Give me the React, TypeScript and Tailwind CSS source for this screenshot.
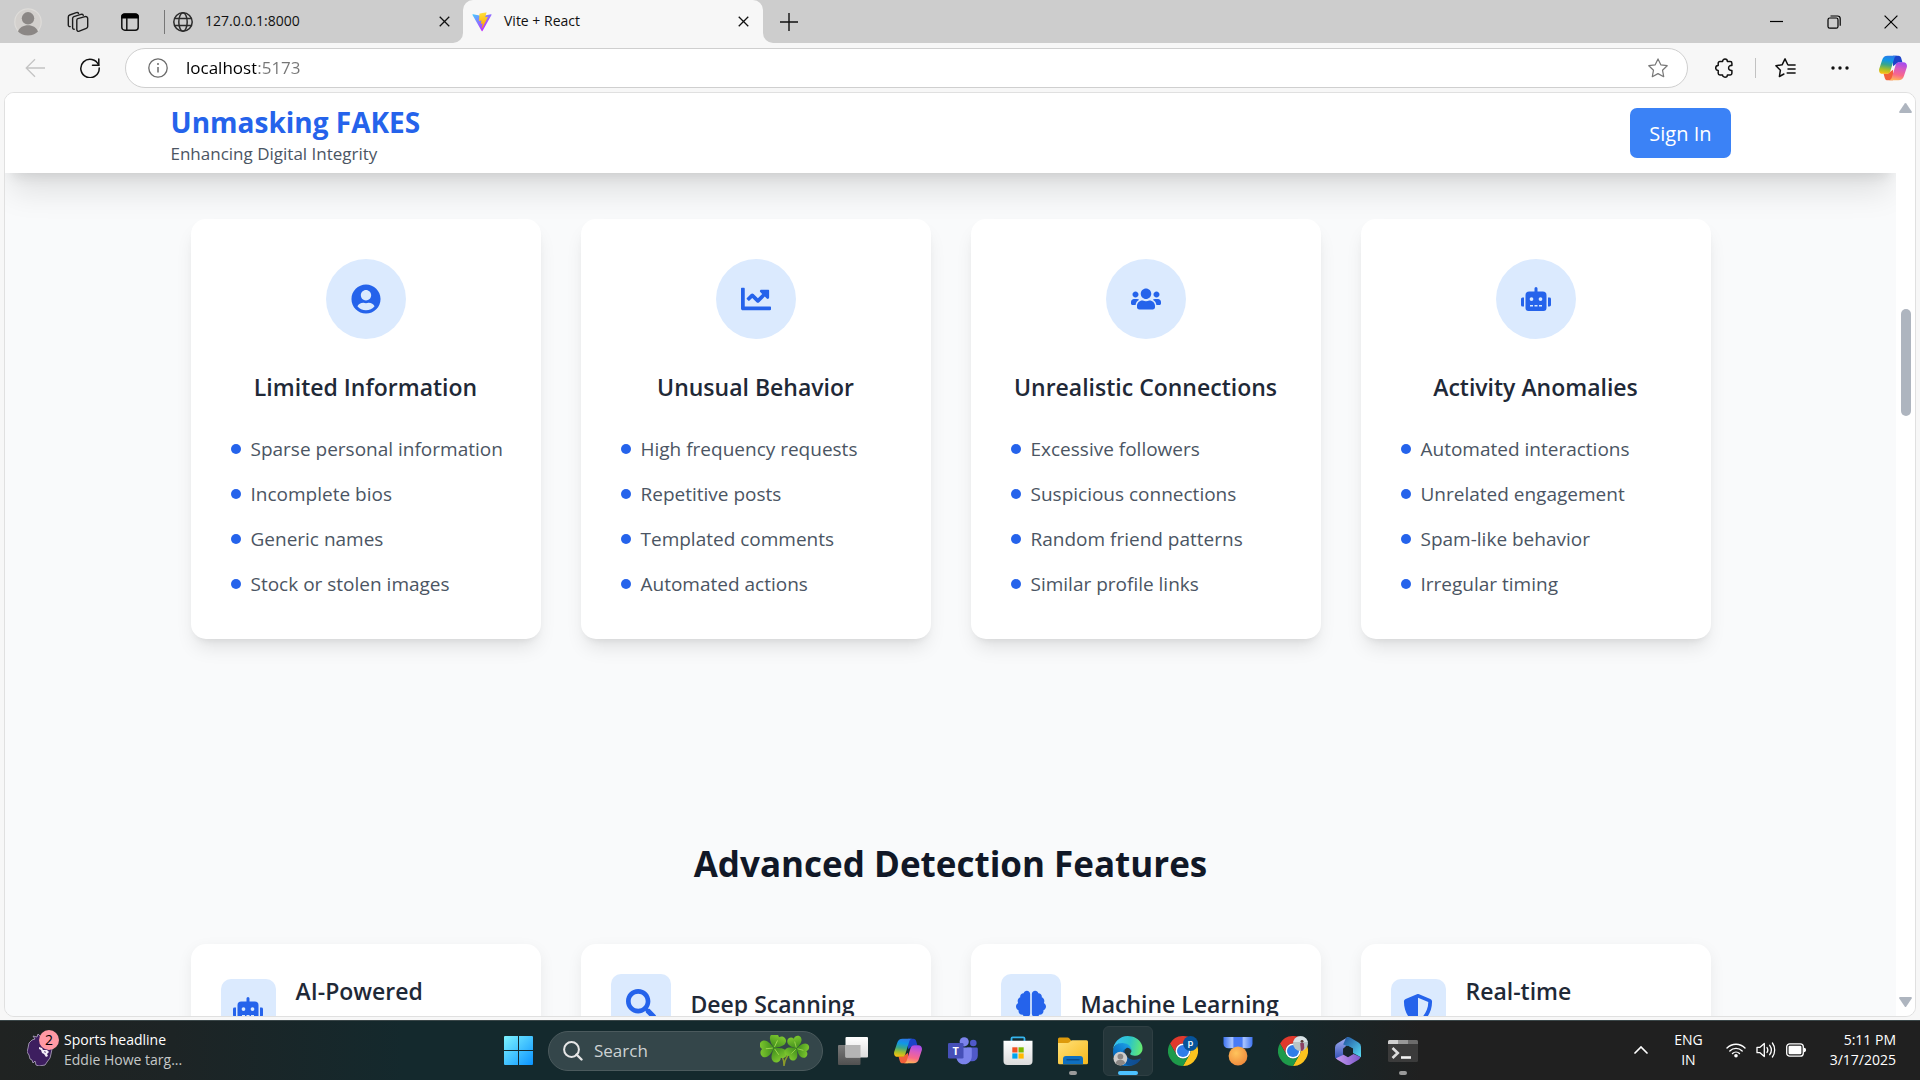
import React from "react";
import { FaBrain, FaChartLine, FaRobot, FaSearch, FaShieldAlt, FaUserCircle, FaUsers } from "react-icons/fa";

type IconProps = { className?: string };

/* ---------- Browser icons ---------- */

function CloseIcon({ className = "size-[11px]" }: IconProps) {
  return (
    <svg viewBox="0 0 12 12" className={className} fill="none" stroke="currentColor" strokeWidth="1.4">
      <path d="M.8.8l10.4 10.4M11.2.8L.8 11.2" />
    </svg>
  );
}

function AvatarIcon() {
  return (
    <svg viewBox="0 0 28 28" className="size-7">
      <circle cx="14" cy="14" r="13.2" fill="#d3d0cd" stroke="#dedcd9" strokeWidth="1.2" />
      <circle cx="14" cy="10.3" r="6.2" fill="#8b8785" />
      <path d="M4 23.4c1.5-4 5.4-6.2 10-6.2s8.500 2.200 10 6.200A13.500 13.500 0 0 1 14 27.500 13.500 13.500 0 0 1 4 23.400z" fill="#8b8785" />
    </svg>
  );
}

function WorkspacesIcon() {
  return (
    <svg viewBox="0 0 22 22" className="size-[22px]" fill="none" stroke="#1d1d1d" strokeWidth="1.400" strokeLinejoin="round" strokeLinecap="round">
      <path d="M10.800 7.700l7.200-2.100c1.300-.4 2.700.4 2.700 1.900v8c0 .9-.6 1.600-1.400 1.900l-7 2.800c-1.200.5-2.500-.3-2.500-1.700V9.400c0-.8.300-1.500 1-1.700z" />
      <path d="M7.200 18.300c-1 .1-1.600-.700-1.600-1.700V7.600c0-1 .5-1.700 1.300-2l7-2.200c1-.3 2 .1 2.400.9" />
      <path d="M3.200 15.600C2.200 15.800 1.300 15 1.300 14V6c0-1 .5-1.700 1.400-2l6.600-2.300c1-.3 1.900 0 2.300.7" />
    </svg>
  );
}

function TabMenuIcon() {
  return (
    <svg viewBox="0 0 20 20" className="size-5" fill="none">
      <rect x="1.800" y="2" width="16.400" height="16.200" rx="3" stroke="#111" strokeWidth="1.500" />
      <path d="M1.200 6.500V5a3.500 3.500 0 0 1 3.500-3.500h10.600A3.500 3.500 0 0 1 18.800 5v1.500z" fill="#000" />
      <path d="M6.800 6v12" stroke="#111" strokeWidth="1.500" />
    </svg>
  );
}

function GlobeIcon() {
  return (
    <svg viewBox="0 0 20 20" className="size-5" fill="none" stroke="#2b2b2b" strokeWidth="1.500">
      <circle cx="10" cy="10" r="9.200" />
      <ellipse cx="10" cy="10" rx="4.200" ry="9.200" />
      <path d="M1.600 6.600h16.800M1.600 13.400h16.800" />
    </svg>
  );
}

function ViteIcon() {
  return (
    <svg viewBox="0 0 410 404" className="size-5">
      <defs>
        <linearGradient id="viteA" x1="6" y1="33" x2="235" y2="344" gradientUnits="userSpaceOnUse">
          <stop stopColor="#41D1FF" />
          <stop offset="1" stopColor="#BD34FE" />
        </linearGradient>
        <linearGradient id="viteB" x1="194.650" y1="8.800" x2="236" y2="293" gradientUnits="userSpaceOnUse">
          <stop stopColor="#FFEA83" />
          <stop offset=".083" stopColor="#FFDD35" />
          <stop offset="1" stopColor="#FFA800" />
        </linearGradient>
      </defs>
      <path fill="url(#viteA)" d="M399.641 59.525L215.643 388.545C211.844 395.338 202.084 395.378 198.228 388.618L10.582 59.556C6.381 52.190 12.680 43.266 21.028 44.759L205.223 77.682C206.398 77.892 207.601 77.890 208.776 77.676L389.119 44.806C397.439 43.289 403.768 52.143 399.641 59.525Z" />
      <path fill="url(#viteB)" d="M292.965 1.574L156.801 28.255C154.563 28.694 152.906 30.590 152.771 32.866L144.395 174.330C144.198 177.662 147.258 180.248 150.510 179.498L188.420 170.749C191.967 169.931 195.172 173.055 194.443 176.622L183.180 231.775C182.422 235.487 185.907 238.661 189.532 237.560L212.947 230.446C216.577 229.344 220.065 232.527 219.297 236.242L201.398 322.875C200.278 328.294 207.486 331.249 210.492 326.603L212.500 323.500L323.454 102.072C325.312 98.365 322.108 94.137 318.036 94.923L279.014 102.454C275.347 103.161 272.227 99.746 273.262 96.158L298.731 7.867C299.767 4.273 296.636 .855 292.965 1.574Z" />
    </svg>
  );
}

function BackIcon() {
  return (
    <svg viewBox="0 0 20 20" className="size-5" fill="none" stroke="#c4c4c4" strokeWidth="1.300">
      <path d="M20 10H1M10 1.200L1.200 10l8.800 8.800" />
    </svg>
  );
}

function ReloadIcon() {
  return (
    <svg viewBox="0 0 20 20" className="size-5" fill="none" stroke="#111" strokeWidth="1.500" strokeLinecap="round">
      <path d="M18.600 7.100A9.200 9.200 0 1 0 19.200 10" />
      <path d="M18.800.9v6.300h-6.300" />
    </svg>
  );
}

function InfoIcon() {
  return (
    <svg viewBox="0 0 20 20" className="size-5" fill="none" stroke="#6b6b6b" strokeWidth="1.300">
      <circle cx="10" cy="10" r="9.200" />
      <path d="M10 9v5.600" strokeWidth="1.500" />
      <circle cx="10" cy="6" r="1" fill="#6b6b6b" stroke="none" />
    </svg>
  );
}

function StarIcon() {
  return (
    <svg viewBox="0 0 20 20" className="size-5" fill="none" stroke="#777" strokeWidth="1.200" strokeLinejoin="round">
      <path d="M10 .9l2.800 5.900 6.400.9-4.700 4.500 1.200 6.500-5.700-3.100-5.700 3.100 1.200-6.500L.8 7.700l6.400-.9z" />
    </svg>
  );
}

function PuzzleIcon() {
  return (
    <svg viewBox="0 0 20 20" className="size-5" fill="none" stroke="#111" strokeWidth="1.500" strokeLinejoin="round">
      <path d="M3.200 5.200c0-1 .7-1.700 1.700-1.700h2.700C7.600 2 8.600.9 10 .9s2.400 1.100 2.400 2.600h2.800c1 0 1.700.700 1.700 1.700v2.200c-2-.2-3.300.9-3.300 2.500s1.300 2.800 3.300 2.600v2.700c0 1-.7 1.700-1.700 1.700h-2.800c0 1.400-1 2.300-2.400 2.300s-2.400-.9-2.400-2.300H4.900c-1 0-1.700-.7-1.700-1.700v-2.800C1.700 12.400.7 11.400.7 9.900s1-2.500 2.500-2.500z" />
    </svg>
  );
}

function FavoritesIcon() {
  return (
    <svg viewBox="0 0 21 20" className="h-5 w-[21px]" fill="none" stroke="#111" strokeWidth="1.500" strokeLinejoin="round" strokeLinecap="round">
      <path d="M12.800 6.800L10 .9 7.100 6.800l-6.200.9 4.500 4.500-1 6.300 4.500-2.500M12.800 6.800h.4M13.300 6.900h6.800M13 10.900h7.100M12.200 14.900h7.900" />
    </svg>
  );
}

function CopilotIcon({ id, className = "size-7" }: { id: string; className?: string }) {
  return (
    <svg viewBox="0 0 32 32" className={className}>
      <defs>
        <linearGradient id={id + "L"} x1=".5" y1="0" x2=".35" y2="1">
          <stop stopColor="#2a7be8" />
          <stop offset=".25" stopColor="#1097e6" />
          <stop offset=".5" stopColor="#3aa68a" />
          <stop offset=".75" stopColor="#a3bf2c" />
          <stop offset="1" stopColor="#fdbe10" />
        </linearGradient>
        <linearGradient id={id + "R"} x1=".6" y1="0" x2=".4" y2="1">
          <stop stopColor="#a34bf0" />
          <stop offset=".35" stopColor="#d85bc0" />
          <stop offset=".7" stopColor="#f9688a" />
          <stop offset="1" stopColor="#ffb45a" />
        </linearGradient>
      </defs>
      <path fill="#1d43c9" d="M16 2h6c2 0 3 1.200 3.500 3l1.300 4.600h-5L16 14z" />
      <path fill="#f2603a" d="M16 30h-6c-2 0-3-1.200-3.500-3l-1.300-4.600h5L16 18z" />
      <path fill={"url(#" + id + "L)"} d="M9.800 2h11c-1.900 0-2.900 1.300-3.500 3.300l-4.300 14c-.7 2.200-1.900 3.400-4 3.400H4.300C1 22.700-.5 20.200.2 17L3.500 7C4.600 3.700 6.600 2 9.800 2z" />
      <path fill={"url(#" + id + "R)"} d="M22.200 30h-11c1.900 0 2.900-1.300 3.500-3.300l4.300-14c.7-2.200 1.900-3.400 4-3.400h4.700c3.300 0 4.800 2.500 4.100 5.700l-3.300 10c-1.100 3.300-3.100 5-6.300 5z" />
    </svg>
  );
}

/* ---------- Taskbar icons ---------- */

function StartIcon() {
  return (
    <svg viewBox="0 0 29 29" className="size-[29px]">
      <defs>
        <linearGradient id="win" x1="0" y1="0" x2="1" y2="1" gradientUnits="objectBoundingBox">
          <stop stopColor="#7df3ff" />
          <stop offset="1" stopColor="#0a93ff" />
        </linearGradient>
      </defs>
      <path fill="url(#win)" d="M1 0h13v14H0V1a1 1 0 0 1 1-1zM15 0h13a1 1 0 0 1 1 1v13H15zM0 15h14v14H1a1 1 0 0 1-1-1zM15 15h14v13a1 1 0 0 1-1 1H15z" />
    </svg>
  );
}

function CloverLeaf({ transform }: { transform: string }) {
  return (
    <g transform={transform}>
      {[0, 120, 240].map((a) => (
        <g key={a} transform={"rotate(" + a + ")"}>
          <path fill="url(#leaf)" d="M0 0C-3-2-8-5-7-9c.7-3 5-4 7-1 2-3 6.300-2 7 1 1 4-4 7-7 9z" />
          <path d="M0-1v-6" stroke="#a6dc54" strokeWidth=".7" />
        </g>
      ))}
    </g>
  );
}

function CloverIcon() {
  return (
    <svg viewBox="0 0 50 32" className="h-8 w-[50px]">
      <defs>
        <linearGradient id="leaf" x1="0" y1="0" x2="0" y2="1">
          <stop stopColor="#7cc62e" />
          <stop offset="1" stopColor="#3f8e1c" />
        </linearGradient>
      </defs>
      <path d="M15 14c6 3 9 9 9 17M36 14c-7 3-11 8-12 17" fill="none" stroke="#8a9a2b" strokeWidth="1.500" />
      <CloverLeaf transform="translate(14 13) rotate(25) scale(1.180)" />
      <CloverLeaf transform="translate(36.500 13.500) rotate(-15) scale(1.020)" />
    </svg>
  );
}

function TaskViewIcon() {
  return (
    <svg viewBox="0 0 30 28" className="h-7 w-[30px]">
      <defs>
        <linearGradient id="tvA" x1="0" y1="0" x2="0" y2="1">
          <stop stopColor="#7a7a7a" />
          <stop offset="1" stopColor="#505050" />
        </linearGradient>
        <linearGradient id="tvB" x1="0" y1="0" x2="0" y2="1">
          <stop stopColor="#fff" />
          <stop offset="1" stopColor="#dcdcdc" />
        </linearGradient>
      </defs>
      <rect x="0" y="8" width="22.500" height="20" rx="1" fill="url(#tvA)" />
      <rect x="7.500" y="0" width="22.500" height="20.500" rx="1" fill="url(#tvB)" />
      <rect x="7.500" y="8" width="15" height="12.500" fill="#b4b4b4" />
    </svg>
  );
}

function TeamsIcon() {
  return (
    <svg viewBox="0 0 30 28" className="h-7 w-[30px]">
      <circle cx="25.300" cy="6" r="3.300" fill="#5059c9" />
      <path d="M19 10.500h9.500a1.300 1.300 0 0 1 1.300 1.300v7a5.500 5.500 0 0 1-5.500 5.500H21z" fill="#5059c9" />
      <circle cx="16.200" cy="4.800" r="4.600" fill="#7b83eb" />
      <path d="M9.500 10.500h13a1.300 1.300 0 0 1 1.300 1.300V19c0 4.700-3.300 8.300-7.800 8.300S8.200 23.700 8.200 19v-7.200a1.300 1.300 0 0 1 1.300-1.300z" fill="#7b83eb" />
      <rect x="0" y="6" width="15.500" height="15.500" rx="1.300" fill="#4650b8" />
      <text x="7.750" y="17.800" fontSize="11" fontWeight="700" textAnchor="middle" fill="#fff" fontFamily="Open Sans, sans-serif">T</text>
    </svg>
  );
}

function StoreIcon() {
  return (
    <svg viewBox="0 0 30 30" className="size-[30px]">
      <defs>
        <linearGradient id="bag" x1="0" y1="0" x2="0" y2="1">
          <stop stopColor="#fff" />
          <stop offset="1" stopColor="#dcdcdc" />
        </linearGradient>
      </defs>
      <path d="M8.500 6V2.500a1.200 1.200 0 0 1 1.200-1.200h10.600a1.200 1.200 0 0 1 1.200 1.200V6" fill="none" stroke="#35b5ee" strokeWidth="1.800" />
      <path d="M.5 4.800h29V25a4 4 0 0 1-4 4h-21a4 4 0 0 1-4-4z" fill="url(#bag)" />
      <rect x="9.300" y="11.300" width="5.200" height="5.200" fill="#f25022" />
      <rect x="15.500" y="11.300" width="5.200" height="5.200" fill="#7fba00" />
      <rect x="9.300" y="17.400" width="5.200" height="5.200" fill="#00a4ef" />
      <rect x="15.500" y="17.400" width="5.200" height="5.200" fill="#ffb900" />
    </svg>
  );
}

function FolderIcon() {
  return (
    <svg viewBox="0 0 30 28" className="h-7 w-[30px]">
      <defs>
        <linearGradient id="fold" x1="0" y1="0" x2="1" y2="1">
          <stop stopColor="#ffe17a" />
          <stop offset="1" stopColor="#f8b91c" />
        </linearGradient>
      </defs>
      <path d="M0 2a1.500 1.500 0 0 1 1.500-1.500h8.200a2 2 0 0 1 1.500.7L13.500 4v6H0z" fill="#dd9a0c" />
      <path d="M0 6h9.500a3 3 0 0 0 2-.8L13 3.800a2 2 0 0 1 1.400-.6h14.100A1.500 1.500 0 0 1 30 4.700v21a1.500 1.500 0 0 1-1.500 1.500h-27A1.500 1.500 0 0 1 0 25.700z" fill="url(#fold)" />
      <path d="M5 27.200v-5.200a3 3 0 0 1 3-3h14a3 3 0 0 1 3 3v5.200z" fill="#0f6fc0" />
      <path d="M8.500 22.800h13" stroke="#083f7d" strokeWidth="1.100" />
    </svg>
  );
}

function EdgeIcon() {
  return (
    <svg viewBox="0 0 260 260" className="size-[30px]">
      <defs>
        <linearGradient id="eA" x1="63" y1="177" x2="241" y2="177" gradientUnits="userSpaceOnUse">
          <stop stopColor="#0c59a4" />
          <stop offset="1" stopColor="#114a8b" />
        </linearGradient>
        <linearGradient id="eB" x1="157" y1="101" x2="46" y2="222" gradientUnits="userSpaceOnUse">
          <stop stopColor="#1b9de2" />
          <stop offset=".5" stopColor="#0f7ed0" />
          <stop offset="1" stopColor="#0667b8" />
        </linearGradient>
        <linearGradient id="eC" x1="20" y1="70" x2="250" y2="120" gradientUnits="userSpaceOnUse">
          <stop stopColor="#35c1f1" />
          <stop offset=".5" stopColor="#2cc4c9" />
          <stop offset="1" stopColor="#66eb6e" />
        </linearGradient>
      </defs>
      <path fill="url(#eA)" d="M235.680 195.460a93.730 93.730 0 0 1-10.540 4.710 101.870 101.870 0 0 1-35.900 6.460c-47.320 0-88.540-32.550-88.540-74.320a31.480 31.480 0 0 1 16.430-27.450c-42.800 1.800-53.800 46.400-53.800 72.530 0 73.880 68.090 81.370 82.760 81.370 7.910 0 19.840-2.300 27-4.560l1.310-.44a128.340 128.340 0 0 0 66.600-52.800 4 4 0 0 0-5.320-5.500z" />
      <path fill="url(#eB)" d="M105.730 241.420A79.200 79.200 0 0 1 83 220.080 80.720 80.720 0 0 1 117.130 104.860c1.770-.84 4.800-2.360 8.830-2.290A33.400 33.400 0 0 1 152.460 116a33.890 33.890 0 0 1 6.650 19.550c0-.21 24.460-79.600-80-79.600-43.900 0-79 41.660-79 78.210a130.150 130.150 0 0 0 11.110 56 128 128 0 0 0 156.380 67.110 75.550 75.550 0 0 1-61.870-15.850z" />
      <path fill="url(#eC)" d="M152.330 148.860c-.81 1.050-3.300 2.500-3.300 5.660 0 2.610 1.700 5.120 4.720 7.230 14.380 10 41.490 8.680 41.560 8.680a59.560 59.560 0 0 0 30.270-8.350A61.380 61.380 0 0 0 256 109.190C256.260 86.690 248 71.730 244.660 65.130 223.460 23.670 177.720 0 128 0A128 128 0 0 0 0 126.200c.48-36.540 36.800-66.050 80-66.050 3.500 0 23.460.34 42 10.070 16.340 8.580 24.900 18.940 30.850 29.210 6.180 10.670 7.280 24.150 7.280 29.520 0 5.370-2.740 13.330-7.800 19.910z" />
      <circle cx="64" cy="196" r="60" fill="#cfcdcb" />
      <circle cx="64" cy="178" r="25" fill="#8b8785" />
      <path d="M22 236c5-20 22-30 42-30s37 10 42 30a60 60 0 0 1-84 0z" fill="#8b8785" />
    </svg>
  );
}

function ChromeIcon({ badge }: { badge: "letter" | "photo" }) {
  const arc = "M3.200 12A24 24 0 0 1 44.800 12H24A12 12 0 0 0 13.600 30Z";
  return (
    <svg viewBox="0 0 48 48" className="size-[30px]">
      <path d={arc} fill="#e0392d" />
      <path d={arc} fill="#fcc31e" transform="rotate(120 24 24)" />
      <path d={arc} fill="#1e9a4a" transform="rotate(240 24 24)" />
      <circle cx="24" cy="24" r="12" fill="#fff" />
      <circle cx="24" cy="24" r="9.600" fill="#2f7de9" />
      {badge === "letter" ? (
        <>
          <circle cx="36" cy="12" r="12" fill="#06539a" />
          <text x="36" y="16.500" fontSize="15" fontWeight="600" textAnchor="middle" fill="#fff" fontFamily="Open Sans, sans-serif">p</text>
        </>
      ) : (
        <>
          <circle cx="36" cy="12" r="12" fill="#b9c4c6" />
          <path d="M24.500 9.500A12 12 0 0 1 47.500 9.500z" fill="#d8e2e6" />
          <path d="M35.500 12c0-1.500 5.500-1.500 6 0l.5 7-2 4.300-3.300.6z" fill="#8c3f62" />
          <circle cx="38.500" cy="8.500" r="2.300" fill="#5a3a35" />
        </>
      )}
    </svg>
  );
}

function MedalIcon() {
  return (
    <svg viewBox="0 0 30 30" className="size-[30px]">
      <defs>
        <radialGradient id="med" cx=".4" cy=".35" r=".7">
          <stop stopColor="#ffc45c" />
          <stop offset="1" stopColor="#f08a3c" />
        </radialGradient>
        <linearGradient id="rib" x1="0" y1="0" x2="1" y2="0">
          <stop stopColor="#3f74f0" />
          <stop offset=".3" stopColor="#a9c4ff" />
          <stop offset=".5" stopColor="#3d6ff2" />
          <stop offset=".7" stopColor="#a9c4ff" />
          <stop offset="1" stopColor="#3f74f0" />
        </linearGradient>
      </defs>
      <path d="M.5 1h29v6.500c0 3-2 4.800-5 4.800h-19c-3 0-5-1.800-5-4.800z" fill="url(#rib)" />
      <path d="M10.500 1h9v11h-9z" fill="#4a7bf6" />
      <circle cx="15" cy="20" r="9.400" fill="url(#med)" />
    </svg>
  );
}

function M365Icon() {
  return (
    <svg viewBox="0 0 28 30" className="h-[30px] w-7">
      <defs>
        <linearGradient id="mA" x1="0" y1="0" x2="0" y2="1">
          <stop stopColor="#a9b4f5" />
          <stop offset="1" stopColor="#3450b4" />
        </linearGradient>
        <linearGradient id="mB" x1="0" y1="0" x2="1" y2="1">
          <stop stopColor="#1f4f9c" />
          <stop offset="1" stopColor="#59ddf5" />
        </linearGradient>
        <linearGradient id="mC" x1="0" y1="0" x2="1" y2="0">
          <stop stopColor="#c79bf0" />
          <stop offset="1" stopColor="#7a57c9" />
        </linearGradient>
      </defs>
      <path d="M14 1L3.500 7.200A5 5 0 0 0 1 11.500v9c0 1.500 1 2.700 2.500 2.500l5.700-3V13l8-8.500z" fill="url(#mA)" />
      <path d="M12 1.700a4.500 4.500 0 0 1 4.500 0l8 4.800A5 5 0 0 1 27 10.800v10.500L19 17v-4.500L9.200 8.500z" fill="url(#mB)" />
      <path d="M2 22.200l7.500-3.400 4.500 2.500 5.500-3.200 7 3a4.500 4.500 0 0 1-2 2.600l-8 4.700a5 5 0 0 1-5 0l-8-4.700A3.500 3.500 0 0 1 2 22.200z" fill="url(#mC)" />
      <path d="M14 9.700l4.700 2.700v5.400L14 20.500l-4.700-2.700v-5.400z" fill="#182428" />
    </svg>
  );
}

function TerminalIcon() {
  return (
    <svg viewBox="0 0 30 22" className="h-[22px] w-[30px]">
      <rect width="30" height="22" rx="1.500" fill="#3b3b3b" />
      <path d="M0 4V1.500A1.500 1.500 0 0 1 1.500 0H10v4z" fill="#cfcfcf" />
      <path d="M10 0h10v4H10z" fill="#989898" />
      <path d="M20 0h8.500A1.500 1.500 0 0 1 30 1.500V4H20z" fill="#6c6c6c" />
      <path d="M4.500 8l5.300 5-5.300 5" fill="none" stroke="#dcdcdc" strokeWidth="2.600" />
      <path d="M13 17.500h10" stroke="#f2f2f2" strokeWidth="2.600" />
    </svg>
  );
}

function LionIcon() {
  return (
    <svg viewBox="0 0 26 32" className="h-8 w-[26px]">
      <path
        d="M8 5L6 2l4 1 1-3 3 3 4-1 1 4 4 2-1 3 3 4-1 5-1 4-3 4-2 3-6 1-3-1-1-4-2 2-1-3-2-1-1-4-2-3 1-4 1-5 3-3z"
        fill="#3d1e5f"
        stroke="#b5a9c4"
        strokeWidth=".8"
      />
      <path d="M12 13l3 1 1 2 4 0 2 2-2 2 1 2-2 1-2-3-2-1-1-3-2-1z" fill="#f4eef8" />
      <path d="M17 17l2 1-1 1z" fill="#3d1e5f" />
    </svg>
  );
}

function WifiIcon() {
  return (
    <svg viewBox="0 0 20 16" className="h-4 w-5" fill="none" stroke="#fff" strokeWidth="1.400" strokeLinecap="round">
      <path d="M1 6a12.700 12.700 0 0 1 18 0M3.800 8.900a8.800 8.800 0 0 1 12.400 0M6.500 11.600a5 5 0 0 1 7 0" />
      <circle cx="10" cy="13.700" r="1.800" fill="#fff" stroke="none" />
    </svg>
  );
}

function SpeakerIcon() {
  return (
    <svg viewBox="0 0 20 18" className="h-[18px] w-5" fill="none" stroke="#fff" strokeWidth="1.300" strokeLinecap="round" strokeLinejoin="round">
      <path d="M1 6.300h3L8.300 2.500v13L4 11.700H1z" />
      <path d="M11 6.500c1 1.500 1 3.500 0 5M13.700 4.300c2 2.800 2 6.600 0 9.400M16.400 2c3 4 3 10 0 14" />
    </svg>
  );
}

function BatteryIcon() {
  return (
    <svg viewBox="0 0 20 14" className="h-3.5 w-5">
      <rect x=".7" y=".8" width="16.600" height="12.400" rx="3" fill="none" stroke="#fff" strokeWidth="1.300" />
      <rect x="2.600" y="2.700" width="12.800" height="8.600" rx="1.200" fill="#fff" />
      <path d="M18 4.800c1.200 0 2 .8 2 2.200s-.8 2.200-2 2.200z" fill="#fff" />
    </svg>
  );
}

/* ---------- Browser chrome ---------- */

function TabStrip() {
  return (
    <div className="flex h-[43px] shrink-0 text-[14px] text-[#111]">
      <div className="flex w-[463px] shrink-0 items-center rounded-br-[10px] bg-[#cdcdcd] pr-[13px] pl-3.5">
        <button aria-label="Profile">
          <AvatarIcon />
        </button>
        <button aria-label="Workspaces" className="ml-[25px]">
          <WorkspacesIcon />
        </button>
        <button aria-label="Tab actions" className="ml-[31px]">
          <TabMenuIcon />
        </button>
        <div className="ml-6 h-6 w-px bg-[#777]" />
        <div className="ml-2 flex grow items-center">
          <GlobeIcon />
          <span className="ml-3 pb-0.5">127.0.0.1:8000</span>
          <button aria-label="Close tab" className="ml-auto">
            <CloseIcon />
          </button>
        </div>
      </div>
      <div className="w-[300px] shrink-0 bg-[#cdcdcd]">
        <div className="flex h-full items-center rounded-t-[10px] bg-[#f7f7f7] pr-3.5 pl-[9px]">
          <ViteIcon />
          <span className="ml-3 pb-0.5">Vite + React</span>
          <button aria-label="Close tab" className="ml-auto">
            <CloseIcon />
          </button>
        </div>
      </div>
      <div className="flex grow items-center rounded-bl-[10px] bg-[#cdcdcd] pr-px pl-[17px]">
        <button aria-label="New tab">
          <svg viewBox="0 0 18 18" className="size-[18px]" stroke="#111" strokeWidth="1.400">
            <path d="M9 0v18M0 9h18" />
          </svg>
        </button>
        <div className="ml-auto flex h-full">
          <button aria-label="Minimize" className="flex w-[57px] items-center justify-center">
            <svg viewBox="0 0 13 13" className="size-[13px]" stroke="#000" strokeWidth="1.200">
              <path d="M0 6.500h13" />
            </svg>
          </button>
          <button aria-label="Restore" className="flex w-[57px] items-center justify-center">
            <svg viewBox="0 0 14 14" className="size-3.5" fill="none" stroke="#000" strokeWidth="1.200">
              <rect x="1" y="3" width="10" height="10.200" rx="1.800" />
              <path d="M3.500 1h7a2.700 2.700 0 0 1 2.700 2.700v7" />
            </svg>
          </button>
          <button aria-label="Close window" className="flex w-[57px] items-center justify-center">
            <svg viewBox="0 0 14 14" className="size-3.5" stroke="#000" strokeWidth="1.200">
              <path d="M.6.600l12.800 12.800M13.400.600L.6 13.400" />
            </svg>
          </button>
        </div>
      </div>
    </div>
  );
}

function Toolbar() {
  return (
    <div className="flex h-[49px] shrink-0 items-center pr-[13px] pl-[25px]">
      <button aria-label="Back">
        <BackIcon />
      </button>
      <button aria-label="Refresh" className="ml-[35px]">
        <ReloadIcon />
      </button>
      <div className="ml-[25px] flex h-10 grow items-center rounded-full border border-[#cfcfcf] bg-white pr-[19px] pl-[22px]">
        <InfoIcon />
        <input
          aria-label="Address"
          defaultValue="localhost:5173"
          className="ml-[18px] grow bg-[linear-gradient(90deg,#000_70px,#757575_70px)] bg-clip-text text-[17px] text-transparent outline-none"
        />
        <button aria-label="Add to favorites">
          <StarIcon />
        </button>
      </div>
      <button aria-label="Extensions" className="ml-[27px]">
        <PuzzleIcon />
      </button>
      <div className="ml-5 h-5 w-px bg-[#c2c2c2]" />
      <button aria-label="Favorites" className="ml-[19px]">
        <FavoritesIcon />
      </button>
      <button aria-label="More" className="ml-[35px]">
        <svg viewBox="0 0 18 4" className="h-1 w-[18px]" fill="#111">
          <circle cx="2" cy="2" r="1.700" />
          <circle cx="9" cy="2" r="1.700" />
          <circle cx="16" cy="2" r="1.700" />
        </svg>
      </button>
      <button aria-label="Copilot" className="ml-[30px]">
        <CopilotIcon id="cpBar" />
      </button>
    </div>
  );
}

/* ---------- Web page ---------- */

const signs = [
  {
    title: "Limited Information",
    Icon: FaUserCircle,
    items: ["Sparse personal information", "Incomplete bios", "Generic names", "Stock or stolen images"],
  },
  {
    title: "Unusual Behavior",
    Icon: FaChartLine,
    items: ["High frequency requests", "Repetitive posts", "Templated comments", "Automated actions"],
  },
  {
    title: "Unrealistic Connections",
    Icon: FaUsers,
    items: ["Excessive followers", "Suspicious connections", "Random friend patterns", "Similar profile links"],
  },
  {
    title: "Activity Anomalies",
    Icon: FaRobot,
    items: ["Automated interactions", "Unrelated engagement", "Spam-like behavior", "Irregular timing"],
  },
];

const features = [
  { title: "AI-Powered", Icon: FaRobot, box: "w-[55px]", text: "min-h-[70px]" },
  { title: "Deep Scanning", Icon: FaSearch, box: "w-[60px]", text: "min-h-[35px]" },
  { title: "Machine Learning", Icon: FaBrain, box: "w-[60px]", text: "min-h-[35px]" },
  { title: "Real-time", Icon: FaShieldAlt, box: "w-[55px]", text: "min-h-[70px]" },
];

function SiteHeader() {
  return (
    <header className="relative z-10 bg-white shadow-[0_25px_31px_-6px_rgba(0,0,0,0.1),0_10px_12px_-7px_rgba(0,0,0,0.1)]">
      <div className="mx-auto flex h-20 max-w-[1600px] items-center justify-between px-5">
        <div className="pt-1.5">
          <h1 className="text-[28px] leading-9 font-bold text-[#2563eb]">Unmasking FAKES</h1>
          <p className="text-[17px] leading-7 text-[#4b5563]">Enhancing Digital Integrity</p>
        </div>
        <button className="h-[50px] rounded-[7px] bg-[#3b82f6] px-[19px] pt-0.5 text-[20px] font-medium text-white">Sign In</button>
      </div>
    </header>
  );
}

function Page() {
  return (
    <main className="min-w-0 grow overflow-hidden bg-[#f9fafb]">
      <SiteHeader />
      <section className="mx-auto grid max-w-[1600px] grid-cols-4 gap-10 px-10 pt-[46px]">
        {signs.map(({ title, Icon, items }) => (
          <article
            key={title}
            className="rounded-[15px] bg-white p-10 shadow-[0_12px_19px_-4px_rgba(0,0,0,0.1),0_5px_8px_-5px_rgba(0,0,0,0.1)]"
          >
            <div className="mx-auto flex size-20 items-center justify-center rounded-full bg-[#dbeafe] text-[30px] text-[#2563eb]">
              <Icon />
            </div>
            <h3 className="mt-[31px] text-center text-[23px] leading-[35px] font-semibold whitespace-nowrap text-[#1f2937]">{title}</h3>
            <ul className="mt-[29px] flex flex-col gap-[15px] text-[19px] leading-[30px] whitespace-nowrap text-[#4b5563]">
              {items.map((item) => (
                <li key={item} className="flex items-center gap-2.5">
                  <span className="size-2.5 shrink-0 rounded-full bg-[#2563eb]" />
                  {item}
                </li>
              ))}
            </ul>
          </article>
        ))}
      </section>
      <section className="mx-auto max-w-[1600px] px-10 pt-[202px]">
        <h2 className="text-center text-[35px] leading-[45px] font-bold text-[#111827]">Advanced Detection Features</h2>
        <div className="mt-[58px] grid grid-cols-4 gap-10">
          {features.map(({ title, Icon, box, text }) => (
            <article key={title} className="rounded-[15px] bg-white p-[30px] shadow-[0_5px_16px_-1px_rgba(0,0,0,0.08)]">
              <div className="flex items-center gap-5">
                <div className={box + " flex h-[60px] shrink-0 items-center justify-center rounded-[10px] bg-[#dbeafe] text-[30px] text-[#2563eb]"}>
                  <Icon />
                </div>
                <h3 className={text + " text-[23px] leading-[35px] font-semibold whitespace-nowrap text-[#1f2937]"}>{title}</h3>
              </div>
            </article>
          ))}
        </div>
      </section>
    </main>
  );
}

function Scrollbar() {
  return (
    <div className="flex w-[19px] shrink-0 flex-col items-center bg-white pt-2.5 pb-[9px]">
      <svg viewBox="0 0 13 10" className="h-2.5 w-[13px]" fill="#aeb5bf">
        <path d="M5.700.6a1 1 0 0 1 1.600 0l5.400 8c.4.700 0 1.400-.8 1.400H1.100c-.8 0-1.200-.700-.8-1.400z" />
      </svg>
      <div className="mt-[196px] h-[107px] w-2.5 rounded-full bg-[#aeb5bf]" />
      <svg viewBox="0 0 13 10" className="mt-auto h-2.5 w-[13px]" fill="#aeb5bf">
        <path d="M5.700 9.400a1 1 0 0 0 1.600 0l5.400-8c.4-.7 0-1.400-.8-1.400H1.100C.3 0-.1.700.3 1.400z" />
      </svg>
    </div>
  );
}

/* ---------- Taskbar ---------- */

function TaskButton({ label, children, state }: { label: string; children: React.ReactNode; state?: "open" | "active" }) {
  return (
    <button
      aria-label={label}
      className={
        state === "active"
          ? "relative flex size-[50px] items-center justify-center rounded-md border border-[#2f3f43] bg-[#24363a]"
          : "relative flex size-[50px] items-center justify-center"
      }
    >
      {children}
      {state === "active" && <span className="absolute bottom-0 h-1 w-5 rounded-full bg-[#4cc2ff]" />}
      {state === "open" && <span className="absolute bottom-px h-1 w-2 rounded-full bg-[#9a9a9a]" />}
    </button>
  );
}

function Taskbar() {
  return (
    <footer className="grid h-[60px] shrink-0 grid-cols-[1fr_auto_1fr] items-center border-t border-[#3a4648] bg-[linear-gradient(90deg,#202322_0%,#1d2425_9%,#14292d_21%,#14292d_66%,#202020_74%)] pl-px text-[14px] leading-5 text-white">
      <button className="flex items-center gap-[11px] justify-self-start pb-0.5 pl-[26px] text-left">
        <span className="relative">
          <LionIcon />
          <span className="absolute -top-1 left-3 flex size-5 items-center justify-center rounded-full bg-[#ff99a4] text-[14px] leading-5 text-black">2</span>
        </span>
        <span>
          <span className="block">Sports headline</span>
          <span className="block text-[#c5c8c8]">Eddie Howe targ...</span>
        </span>
      </button>
      <nav className="flex items-center gap-[5px]">
        <TaskButton label="Start">
          <StartIcon />
        </TaskButton>
        <div className="flex h-10 w-[275px] items-center rounded-full border border-[#4b5a5d] bg-[#34464a] pr-3 pl-3.5">
          <svg viewBox="0 0 20 20" className="size-5" fill="none" stroke="#e6e6e6" strokeWidth="2" strokeLinecap="round">
            <circle cx="8.500" cy="8.500" r="7.400" />
            <path d="M13.500 13.500l5 5" strokeWidth="2.400" />
          </svg>
          <input aria-label="Search" placeholder="Search" className="ml-[11px] w-0 grow bg-transparent text-[17px] outline-none placeholder:text-[#cdd2d3] placeholder:opacity-100" />
          <CloverIcon />
        </div>
        <TaskButton label="Task view">
          <TaskViewIcon />
        </TaskButton>
        <TaskButton label="Copilot">
          <CopilotIcon id="cpTask" />
        </TaskButton>
        <TaskButton label="Teams">
          <TeamsIcon />
        </TaskButton>
        <TaskButton label="Store">
          <StoreIcon />
        </TaskButton>
        <TaskButton label="File Explorer" state="open">
          <FolderIcon />
        </TaskButton>
        <TaskButton label="Edge" state="active">
          <EdgeIcon />
        </TaskButton>
        <TaskButton label="Chrome, work profile">
          <ChromeIcon badge="letter" />
        </TaskButton>
        <TaskButton label="Rewards">
          <MedalIcon />
        </TaskButton>
        <TaskButton label="Chrome, personal profile">
          <ChromeIcon badge="photo" />
        </TaskButton>
        <TaskButton label="Microsoft 365">
          <M365Icon />
        </TaskButton>
        <TaskButton label="Terminal" state="open">
          <TerminalIcon />
        </TaskButton>
      </nav>
      <div className="flex items-center justify-self-end pr-6 pb-0.5">
        <button aria-label="Show hidden icons">
          <svg viewBox="0 0 14 8" className="h-2 w-3.5" fill="none" stroke="#fff" strokeWidth="1.700" strokeLinecap="round">
            <path d="M1 7l6-6 6 6" />
          </svg>
        </button>
        <button className="ml-[26px] text-center">
          <span className="block">ENG</span>
          <span className="block">IN</span>
        </button>
        <button aria-label="Network, volume and battery" className="ml-[23px] flex items-center gap-2.5">
          <WifiIcon />
          <SpeakerIcon />
          <BatteryIcon />
        </button>
        <button className="ml-6 text-right">
          <span className="block">5:11 PM</span>
          <span className="block">3/17/2025</span>
        </button>
      </div>
    </footer>
  );
}

export default function App() {
  return (
    <div className="flex h-screen flex-col bg-[#f7f7f7] font-['Open_Sans','Noto_Sans',sans-serif]">
      <TabStrip />
      <Toolbar />
      <div className="mx-1 mb-[3px] flex min-h-0 grow overflow-hidden rounded-[10px] border border-[#e0e0e0]">
        <Page />
        <Scrollbar />
      </div>
      <Taskbar />
    </div>
  );
}
